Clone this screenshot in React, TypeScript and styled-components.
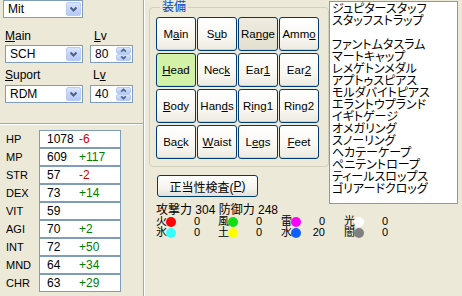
import React from "react";
import styled, { createGlobalStyle } from "styled-components";

const GlobalStyle = createGlobalStyle`
  html, body {
    margin: 0;
    padding: 0;
    background: #ECE9D8;
  }
  body {
    font-family: "Liberation Sans", "Noto Sans CJK JP", sans-serif;
    font-size: 11px;
    color: #000;
    font-feature-settings: "palt";
  }
`;

type Diff = { text: string; up: boolean } | null;

const stats: { name: string; value: string; diff: Diff }[] = [
  { name: "HP", value: "1078", diff: { text: "-6", up: false } },
  { name: "MP", value: "609", diff: { text: "+117", up: true } },
  { name: "STR", value: "57", diff: { text: "-2", up: false } },
  { name: "DEX", value: "73", diff: { text: "+14", up: true } },
  { name: "VIT", value: "59", diff: null },
  { name: "AGI", value: "70", diff: { text: "+2", up: true } },
  { name: "INT", value: "72", diff: { text: "+50", up: true } },
  { name: "MND", value: "64", diff: { text: "+34", up: true } },
  { name: "CHR", value: "63", diff: { text: "+29", up: true } },
];

// [before, underlined, after]
const slots: { parts: [string, string, string]; tone?: "active" | "dim" }[] = [
  { parts: ["M", "a", "in"] },
  { parts: ["S", "u", "b"] },
  { parts: ["Ra", "n", "ge"], tone: "dim" },
  { parts: ["Amm", "o", ""] },
  { parts: ["", "H", "ead"], tone: "active" },
  { parts: ["Nec", "k", ""] },
  { parts: ["Ear", "1", ""] },
  { parts: ["Ear", "2", ""] },
  { parts: ["", "B", "ody"] },
  { parts: ["Han", "d", "s"] },
  { parts: ["R", "i", "ng1"] },
  { parts: ["Rin", "g", "2"] },
  { parts: ["Ba", "c", "k"] },
  { parts: ["", "W", "aist"] },
  { parts: ["L", "e", "gs"] },
  { parts: ["", "F", "eet"] },
];

const equipList = [
  "ジュピタースタッフ",
  "スタッフストラップ",
  "",
  "ファントムタスラム",
  "マートキャップ",
  "レメゲトンメダル",
  "アプトゥスピアス",
  "モルダバイトピアス",
  "エラントウプランド",
  "イギトゲージ",
  "オメガリング",
  "スノーリング",
  "ヘカテーケープ",
  "ペニテントロープ",
  "ティールスロップス",
  "ゴリアードクロッグ",
];

const elements = [
  { kanji: "火", color: "#FF0000", value: "0" },
  { kanji: "風", color: "#11DD11", value: "0" },
  { kanji: "雷", color: "#FF00FF", value: "0" },
  { kanji: "光", color: "#FFFFFF", value: "0" },
  { kanji: "氷", color: "#33FFFF", value: "0" },
  { kanji: "土", color: "#FFFF00", value: "0" },
  { kanji: "水", color: "#1060FF", value: "20" },
  { kanji: "闇", color: "#808080", value: "0" },
];

function Chevron({ dir }: { dir: "down" | "up" }) {
  const d = dir === "down" ? "M1.5 1.5 L4.5 4.5 L7.5 1.5" : "M1.5 4.5 L4.5 1.5 L7.5 4.5";
  return (
    <svg width="9" height="6" viewBox="0 0 9 6">
      <path d={d} fill="none" stroke="#4D6185" strokeWidth="2" />
    </svg>
  );
}

function Combo({ text, width }: { text: string; width: number }) {
  return (
    <ComboBox $width={width}>
      <ComboText>{text}</ComboText>
      <DropButton>
        <Chevron dir="down" />
      </DropButton>
    </ComboBox>
  );
}

function Spin({ text }: { text: string }) {
  return (
    <ComboBox $width={43}>
      <ComboText>{text}</ComboText>
      <SpinButtons>
        <SpinHalf>
          <Chevron dir="up" />
        </SpinHalf>
        <SpinHalf>
          <Chevron dir="down" />
        </SpinHalf>
      </SpinButtons>
    </ComboBox>
  );
}

export default function App() {
  return (
    <>
      <GlobalStyle />
      <Window>
        <LeftPanel>
          <SetupArea>
            <Combo text="Mit" width={80} />
            <LabelRow $top={11}>
              <FieldLabel $width={89}>
                <u>M</u>ain
              </FieldLabel>
              <FieldLabel>
                <u>L</u>v
              </FieldLabel>
            </LabelRow>
            <FieldRow $top={2}>
              <Combo text="SCH" width={78} />
              <Spin text="80" />
            </FieldRow>
            <LabelRow $top={5}>
              <FieldLabel $width={88}>
                <u>S</u>uport
              </FieldLabel>
              <FieldLabel>
                L<u>v</u>
              </FieldLabel>
            </LabelRow>
            <FieldRow $top={3}>
              <Combo text="RDM" width={78} />
              <Spin text="40" />
            </FieldRow>
          </SetupArea>
          <HSeparator />
          <StatList>
            {stats.map((s) => (
              <StatRow key={s.name}>
                <StatName>{s.name}</StatName>
                <StatBox>
                  <StatValue>{s.value}</StatValue>
                  {s.diff && <StatDiff $up={s.diff.up}>{s.diff.text}</StatDiff>}
                </StatBox>
              </StatRow>
            ))}
          </StatList>
        </LeftPanel>

        <RightArea>
          <UpperRow>
            <EquipColumn>
              <GroupBox>
                <GroupLegend>装備</GroupLegend>
                <SlotGrid>
                  {slots.map((s, i) => (
                    <SlotButton key={i} $tone={s.tone}>
                      {s.parts[0]}
                      <u>{s.parts[1]}</u>
                      {s.parts[2]}
                    </SlotButton>
                  ))}
                </SlotGrid>
              </GroupBox>
              <CheckButton>
                正当性検査(<u>P</u>)
              </CheckButton>
              <PowerLine>攻撃力 304 防御力 248</PowerLine>
            </EquipColumn>
            <ItemList>
              {equipList.map((name, i) => (
                <ItemLine key={i}>{name || "\u00a0"}</ItemLine>
              ))}
            </ItemList>
          </UpperRow>
          <ElementGrid>
            {elements.map((e) => (
              <ElementCell key={e.kanji}>
                <ElementKanji>{e.kanji}</ElementKanji>
                <ElementDot $color={e.color} />
                <ElementValue>{e.value}</ElementValue>
              </ElementCell>
            ))}
          </ElementGrid>
        </RightArea>
      </Window>
    </>
  );
}

const Window = styled.div`
  width: 462px;
  height: 296px;
  display: flex;
  overflow: hidden;
  background: #ECE9D8;
`;

const LeftPanel = styled.div`
  width: 143px;
  flex-shrink: 0;
  display: flex;
  flex-direction: column;
  border-right: 1px solid #ACA899;
  box-shadow: 1px 0 0 #FFFFFF;
`;

const SetupArea = styled.div`
  height: 123px;
  padding-left: 3px;
  box-sizing: border-box;
  font-size: 12px;
`;

const LabelRow = styled.div<{ $top: number }>`
  display: flex;
  margin-top: ${(p) => p.$top}px;
  padding-left: 2px;
  height: 14px;
  line-height: 14px;
`;

const FieldLabel = styled.span<{ $width?: number }>`
  width: ${(p) => (p.$width ? `${p.$width}px` : "auto")};
`;

const FieldRow = styled.div<{ $top: number }>`
  display: flex;
  gap: 7px;
  margin-top: ${(p) => p.$top}px;
  padding-left: 2px;
`;

const ComboBox = styled.div<{ $width: number }>`
  width: ${(p) => p.$width}px;
  height: 18px;
  box-sizing: border-box;
  border: 1px solid #7F9DB9;
  background: #FFFFFF;
  display: flex;
  align-items: stretch;
  padding: 1px;
`;

const ComboText = styled.div`
  flex: 1;
  padding-left: 3px;
  line-height: 14px;
`;

const DropButton = styled.div`
  width: 15px;
  box-sizing: border-box;
  border: 1px solid #B9CCF7;
  border-radius: 2px;
  background: linear-gradient(#D9E4FD, #B4C8F4);
  display: flex;
  align-items: center;
  justify-content: center;
`;

const SpinButtons = styled.div`
  width: 15px;
  display: flex;
  flex-direction: column;
`;

const SpinHalf = styled.div`
  flex: 1;
  box-sizing: border-box;
  border: 1px solid #B9CCF7;
  border-radius: 2px;
  background: linear-gradient(#D9E4FD, #B4C8F4);
  display: flex;
  align-items: center;
  justify-content: center;
  svg {
    width: 7px;
    height: 5px;
  }
`;

const HSeparator = styled.div`
  height: 1px;
  background: #ACA899;
  border-bottom: 1px solid #FFFFFF;
`;

const StatList = styled.div`
  padding-top: 5px;
  display: flex;
  flex-direction: column;
  font-size: 12px;
`;

const StatRow = styled.div`
  display: flex;
  align-items: center;
  height: 18px;
`;

const StatName = styled.div`
  width: 39px;
  padding-left: 6px;
  box-sizing: border-box;
  font-size: 11px;
  white-space: nowrap;
`;

const StatBox = styled.div`
  width: 82px;
  height: 18px;
  box-sizing: border-box;
  border: 1px solid #7F9DB9;
  background: #FFFFFF;
  display: flex;
  align-items: center;
  padding-left: 7px;
`;

const StatValue = styled.span`
  width: 32px;
`;

const StatDiff = styled.span<{ $up: boolean }>`
  color: ${(p) => (p.$up ? "#008000" : "#D00000")};
`;

const RightArea = styled.div`
  flex: 1;
  margin-left: 1px;
  display: flex;
  flex-direction: column;
`;

const UpperRow = styled.div`
  display: flex;
`;

const EquipColumn = styled.div`
  width: 184px;
  display: flex;
  flex-direction: column;
`;

const GroupBox = styled.fieldset`
  margin: 0 0 0 4px;
  width: 180px;
  box-sizing: border-box;
  border: 1px solid #D0D0BF;
  border-radius: 4px;
  padding: 3px 0 7px 6px;
`;

const GroupLegend = styled.legend`
  color: #0046D5;
  padding: 0 2px;
  margin-left: 4px;
  line-height: 14px;
  font-size: 12px;
`;

const SlotGrid = styled.div`
  display: grid;
  grid-template-columns: repeat(4, 40px);
  grid-auto-rows: 34px;
  column-gap: 1px;
  row-gap: 2px;
`;

const SlotButton = styled.div<{ $tone?: "active" | "dim" }>`
  box-sizing: border-box;
  border: 1px solid #003C74;
  border-radius: 3px;
  display: flex;
  align-items: center;
  justify-content: center;
  white-space: nowrap;
  font-size: 11.5px;
  background: ${(p) =>
    p.$tone === "active"
      ? "#D4F1A8"
      : p.$tone === "dim"
      ? "linear-gradient(#EEEBE0, #E3E0D1)"
      : "linear-gradient(#FFFFFF 0%, #F8F7F2 60%, #ECEAE0 100%)"};
  box-shadow: inset 0 -1px 0 #D6D0C5;
`;

const CheckButton = styled.div`
  margin: 8px 0 0 12px;
  width: 101px;
  height: 22px;
  box-sizing: border-box;
  border: 1px solid #003C74;
  border-radius: 3px;
  background: linear-gradient(#FFFFFF 0%, #F5F4EF 60%, #E3E0D6 100%);
  display: flex;
  align-items: center;
  justify-content: center;
  font-size: 12px;
`;

const PowerLine = styled.div`
  margin: 7px 0 0 11px;
  line-height: 12px;
  white-space: nowrap;
  font-size: 12px;
`;

const ItemList = styled.div`
  margin-top: 1px;
  width: 129px;
  height: 203px;
  box-sizing: border-box;
  border: 1px solid #7F9DB9;
  background: #FFFFFF;
  padding: 1px 0 0 2px;
  overflow: hidden;
  font-size: 12px;
`;

const ItemLine = styled.div`
  line-height: 12px;
  height: 12px;
  white-space: nowrap;
`;

const ElementGrid = styled.div`
  margin-left: 11px;
  display: grid;
  grid-template-columns: 62px 63px 63px 63px;
  grid-auto-rows: 11px;
  font-size: 11px;
`;

const ElementCell = styled.div`
  display: flex;
  align-items: center;
  line-height: 11px;
  height: 11px;
`;

const ElementKanji = styled.span`
  width: 11px;
`;

const ElementDot = styled.span<{ $color: string }>`
  width: 10px;
  height: 10px;
  border-radius: 50%;
  margin-left: -1px;
  background: ${(p) => p.$color};
`;

const ElementValue = styled.span`
  width: 24px;
  text-align: right;
`;
